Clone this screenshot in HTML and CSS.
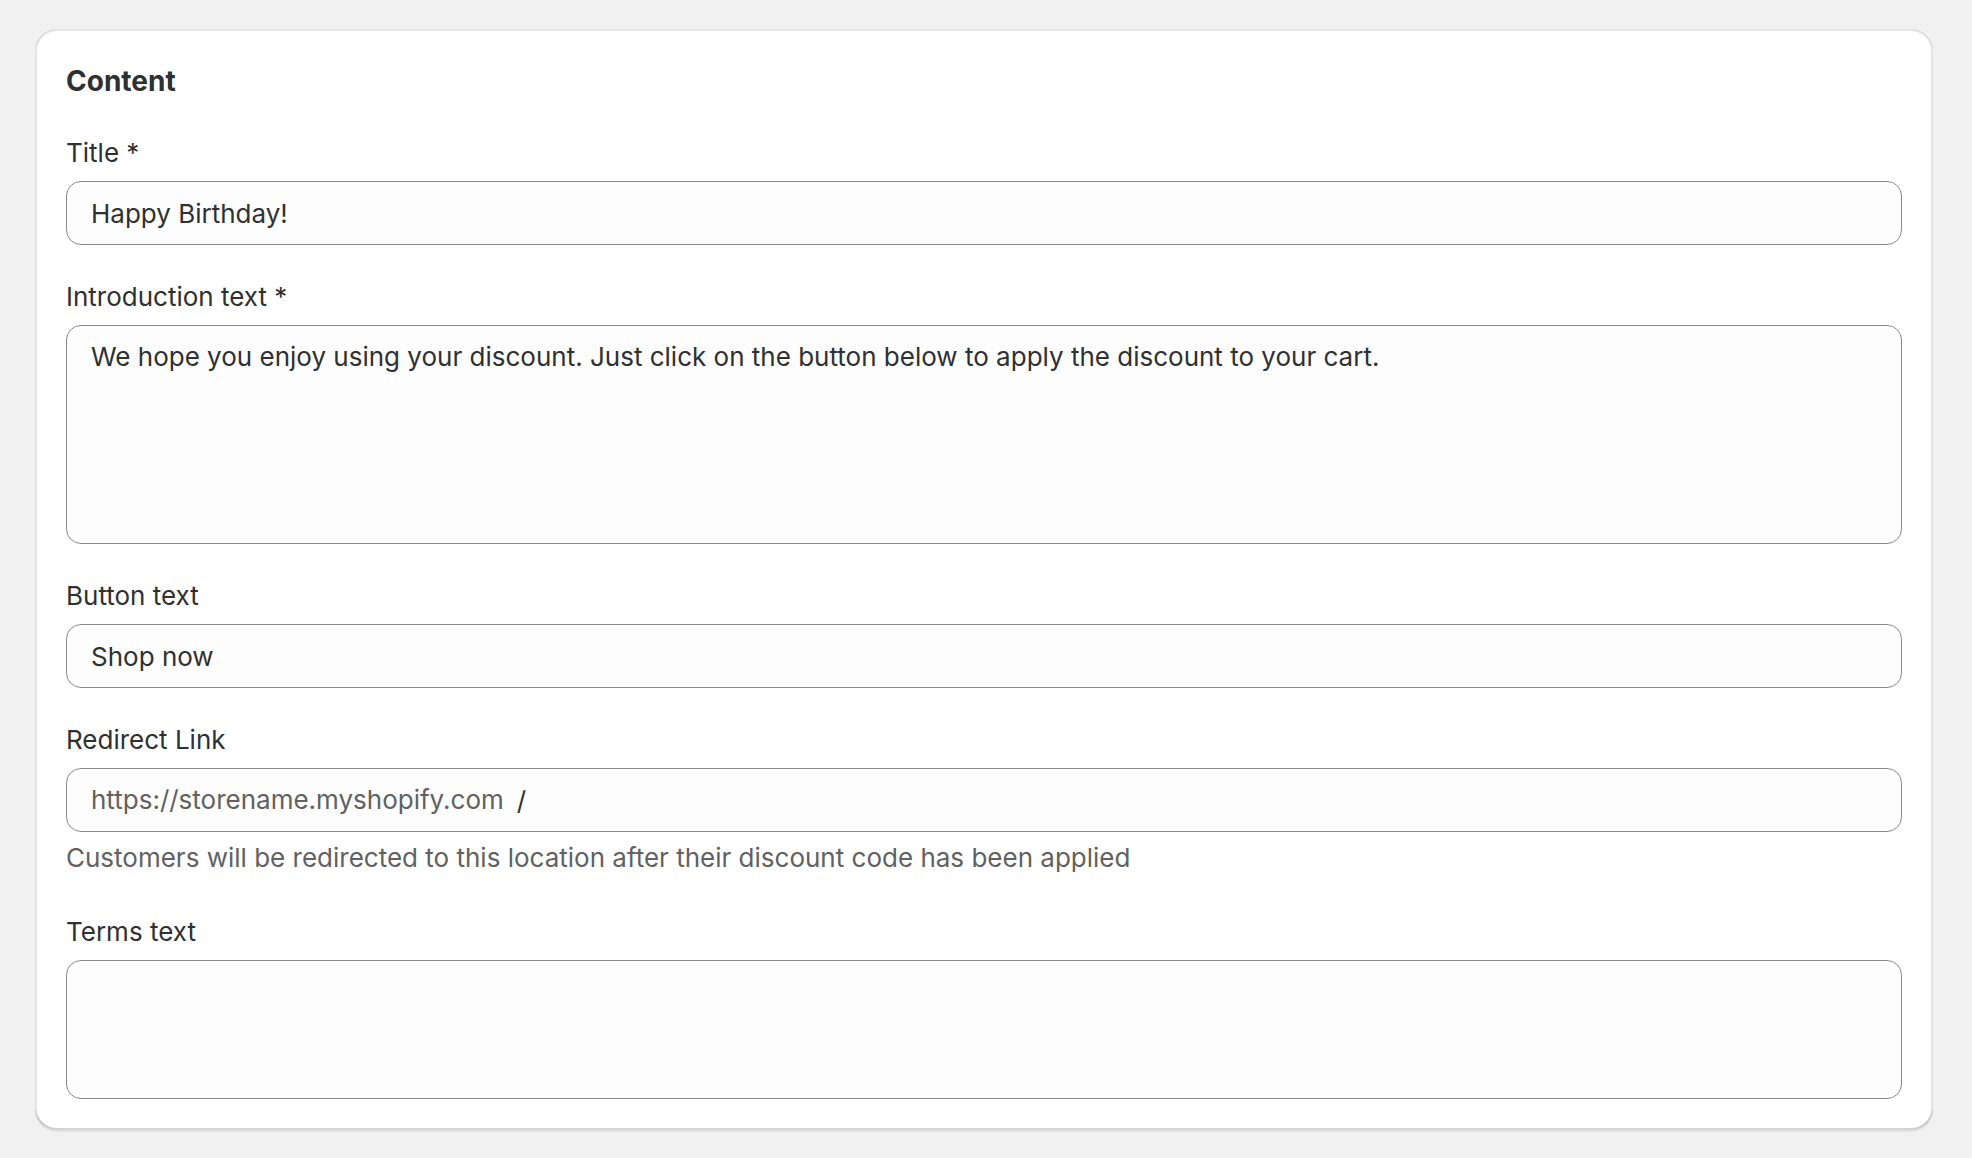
FILE: index.html
```html
<!DOCTYPE html>
<html lang="en">
<head>
  <meta charset="UTF-8" />
  <meta name="viewport" content="width=device-width, initial-scale=1.0"/>
  <title>Content</title>
  <link rel="stylesheet" href="styles.css">
</head>
<body>
  <div class="page">
    <div class="card">
      <h2>Content</h2>

      <div class="field">
        <label for="title">Title *</label>
        <input type="text" id="title" class="text-input" value="Happy Birthday!">
      </div>

      <div class="field">
        <label for="intro">Introduction text *</label>
        <textarea id="intro" class="text-input area-intro">We hope you enjoy using your discount. Just click on the button below to apply the discount to your cart.</textarea>
      </div>

      <div class="field">
        <label for="button-text">Button text</label>
        <input type="text" id="button-text" class="text-input" value="Shop now">
      </div>

      <div class="field">
        <label for="redirect">Redirect Link</label>
        <div class="prefixed">
          <span class="prefix">https://storename.myshopify.com</span>
          <input type="text" id="redirect" value="/">
        </div>
        <p class="help">Customers will be redirected to this location after their discount code has been applied</p>
      </div>

      <div class="field">
        <label for="terms">Terms text</label>
        <textarea id="terms" class="text-input area-terms"></textarea>
      </div>
    </div>
  </div>
</body>
</html>
```

FILE: styles.css
```css
body {
  margin: 0;
  font-family: Inter, "Noto Sans", sans-serif;
  background-color: #f1f1f1;
  color: #303030;
}
.page {
  padding: 29px 39px 28px 35px;
}
.card {
  background: #ffffff;
  border-radius: 22px;
  padding: 32px 31px 31px;
  display: flex;
  flex-direction: column;
  gap: 32px;
  box-shadow:
    0 2px 0 0 rgba(26, 26, 26, 0.07),
    inset 0 2px 0 0 rgba(204, 204, 204, 0.5),
    inset 0 -2px 0 0 rgba(0, 0, 0, 0.17),
    inset -2px 0 0 0 rgba(0, 0, 0, 0.1),
    inset 2px 0 0 0 rgba(0, 0, 0, 0.1);
}
h2 {
  margin: 0;
  font-size: 28px;
  line-height: 40px;
  font-weight: 650;
}
.field {
  display: flex;
  flex-direction: column;
}
label {
  font-size: 26px;
  line-height: 40px;
  margin-bottom: 8px;
}
.text-input,
.prefixed {
  box-sizing: border-box;
  width: 100%;
  height: 64px;
  border: 1px solid #8a8a8a;
  border-radius: 15px;
  background: #fdfdfd;
  font-family: inherit;
  font-size: 26px;
  line-height: 40px;
  color: #303030;
  padding: 11px 24px;
  margin: 0;
  outline: none;
}
textarea.text-input {
  resize: none;
  display: block;
}
.area-intro {
  height: 219px;
}
.area-terms {
  height: 139px;
}
.prefixed {
  display: flex;
  align-items: center;
  padding: 0 24px;
}
.prefix {
  color: #616161;
  font-size: 26px;
  margin-right: 13px;
  white-space: nowrap;
}
.prefixed input {
  flex: 1;
  border: none;
  background: transparent;
  font-family: inherit;
  font-size: 26px;
  color: #303030;
  padding: 0;
  outline: none;
}
.help {
  margin: 6px 0 2px;
  font-size: 26px;
  line-height: 40px;
  color: #616161;
}
```
